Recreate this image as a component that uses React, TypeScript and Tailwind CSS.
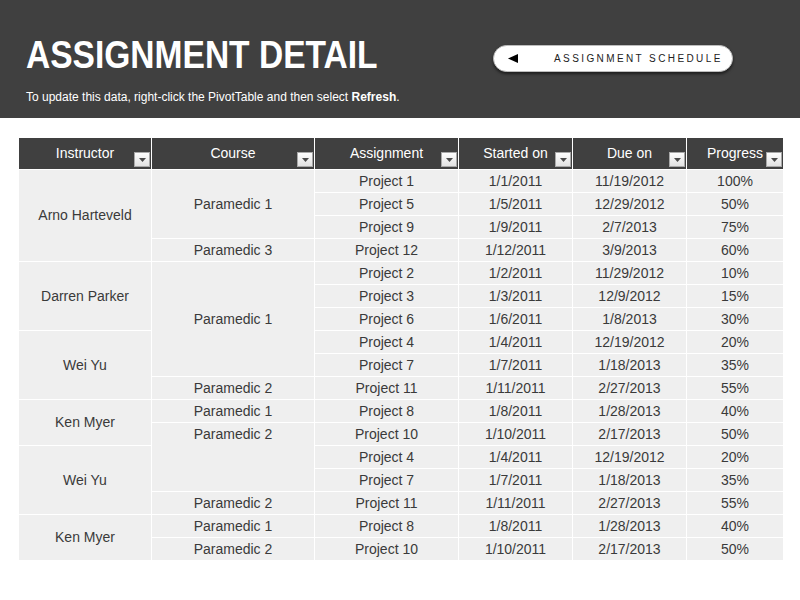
import React from "react";

type Span = { text: string; pos: string; top?: boolean };

const instructors: Span[] = [
  { text: "Arno Harteveld", pos: "[grid-row:2/span_4]" },
  { text: "Darren Parker", pos: "[grid-row:6/span_3]" },
  { text: "Wei Yu", pos: "[grid-row:9/span_3]" },
  { text: "Ken Myer", pos: "[grid-row:12/span_2]" },
  { text: "Wei Yu", pos: "[grid-row:14/span_3]" },
  { text: "Ken Myer", pos: "[grid-row:17/span_2]" },
];

const courses: Span[] = [
  { text: "Paramedic 1", pos: "[grid-row:2/span_3]" },
  { text: "Paramedic 3", pos: "[grid-row:5/span_1]" },
  { text: "Paramedic 1", pos: "[grid-row:6/span_5]" },
  { text: "Paramedic 2", pos: "[grid-row:11/span_1]" },
  { text: "Paramedic 1", pos: "[grid-row:12/span_1]" },
  { text: "Paramedic 2", pos: "[grid-row:13/span_3]", top: true },
  { text: "Paramedic 2", pos: "[grid-row:16/span_1]" },
  { text: "Paramedic 1", pos: "[grid-row:17/span_1]" },
  { text: "Paramedic 2", pos: "[grid-row:18/span_1]" },
];

const rows: string[][] = [
  ["Project 1", "1/1/2011", "11/19/2012", "100%"],
  ["Project 5", "1/5/2011", "12/29/2012", "50%"],
  ["Project 9", "1/9/2011", "2/7/2013", "75%"],
  ["Project 12", "1/12/2011", "3/9/2013", "60%"],
  ["Project 2", "1/2/2011", "11/29/2012", "10%"],
  ["Project 3", "1/3/2011", "12/9/2012", "15%"],
  ["Project 6", "1/6/2011", "1/8/2013", "30%"],
  ["Project 4", "1/4/2011", "12/19/2012", "20%"],
  ["Project 7", "1/7/2011", "1/18/2013", "35%"],
  ["Project 11", "1/11/2011", "2/27/2013", "55%"],
  ["Project 8", "1/8/2011", "1/28/2013", "40%"],
  ["Project 10", "1/10/2011", "2/17/2013", "50%"],
  ["Project 4", "1/4/2011", "12/19/2012", "20%"],
  ["Project 7", "1/7/2011", "1/18/2013", "35%"],
  ["Project 11", "1/11/2011", "2/27/2013", "55%"],
  ["Project 8", "1/8/2011", "1/28/2013", "40%"],
  ["Project 10", "1/10/2011", "2/17/2013", "50%"],
];

const headers = ["Instructor", "Course", "Assignment", "Started on", "Due on", "Progress"];

function Drop() {
  return (
    <span className="absolute right-[1px] bottom-[2px] w-[16px] h-[15px] bg-linear-to-b from-[#fdfdfd] to-[#e2e2e2] border border-[#a8a8a8] flex items-center justify-center">
      <svg width="7" height="4" viewBox="0 0 7 4">
        <path d="M0 0h7L3.5 4z" fill="#4a4a4a" />
      </svg>
    </span>
  );
}

export default function App() {
  return (
    <div className="w-[800px] h-[600px] bg-white font-['Liberation_Sans',Arial,sans-serif] overflow-hidden">
      <div className="h-[118px] bg-[#404040] flex justify-between">
        <div className="pl-[26px] pt-[35px]">
          <h1 className="text-[39px] leading-none font-bold text-white scale-x-[0.86] origin-left whitespace-nowrap">
            ASSIGNMENT DETAIL
          </h1>
          <p className="mt-[17px] text-[12px] leading-none text-white whitespace-nowrap">
            To update this data, right-click the PivotTable and then select <b>Refresh</b>.
          </p>
        </div>
        <div className="mt-[45px] mr-[67px] w-[240px] h-[27px] rounded-full bg-white border border-[#bdbdbd] shadow-[0_2px_3px_rgba(0,0,0,0.55)] flex items-center pl-[14px]">
          <svg width="10" height="9" viewBox="0 0 10 9">
            <path d="M0 4.5L10 0v9z" fill="#000" />
          </svg>
          <span className="ml-[36px] text-[10px] tracking-[2.4px] text-[#222]">ASSIGNMENT SCHEDULE</span>
        </div>
      </div>

      <div className="ml-[19px] mt-[20px] w-[764px] grid grid-cols-[132px_162px_143px_113px_113px_96px] grid-rows-[31px_repeat(17,22px)] gap-px bg-white text-[14px] text-[#3a3a3a]">
        {headers.map((h) => (
          <div key={h} className="relative bg-[#404040] text-white flex items-center justify-center">
            {h}
            <Drop />
          </div>
        ))}
        {instructors.map((c, i) => (
          <div key={"i" + i} className={`col-start-1 ${c.pos} bg-[#efefef] flex items-center justify-center`}>
            {c.text}
          </div>
        ))}
        {courses.map((c, i) => (
          <div
            key={"c" + i}
            className={`col-start-2 ${c.pos} bg-[#efefef] flex justify-center ${c.top ? "items-start" : "items-center"}`}
          >
            {c.top ? <span className="h-[22px] flex items-center">{c.text}</span> : c.text}
          </div>
        ))}
        {rows.map((r, i) =>
          r.map((v, j) => (
            <div key={`r${i}-${j}`} className="bg-[#efefef] flex items-center justify-center">
              {v}
            </div>
          ))
        )}
      </div>
    </div>
  );
}
